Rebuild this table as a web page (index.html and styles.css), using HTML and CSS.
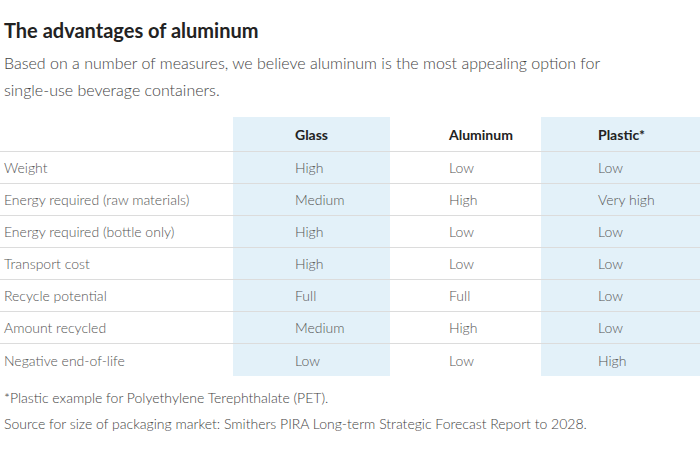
FILE: index.html
```html
<!DOCTYPE html>
<html>
<head>
<meta charset="utf-8">
<link rel="stylesheet" href="styles.css">
</head>
<body>
<div class="page">
  <h1 class="title">The advantages of aluminum</h1>
  <p class="subtitle">Based on a number of measures, we believe aluminum is the most appealing option for single-use beverage containers.</p>
  <div class="table">
    <div class="row head">
      <div class="cell label"></div>
      <div class="cell c1 shade">Glass</div>
      <div class="cell c2">Aluminum</div>
      <div class="cell c3 shade">Plastic*</div>
    </div>
    <div class="row">
      <div class="cell label">Weight</div>
      <div class="cell c1 shade">High</div>
      <div class="cell c2">Low</div>
      <div class="cell c3 shade">Low</div>
    </div>
    <div class="row">
      <div class="cell label">Energy required (raw materials)</div>
      <div class="cell c1 shade">Medium</div>
      <div class="cell c2">High</div>
      <div class="cell c3 shade">Very high</div>
    </div>
    <div class="row">
      <div class="cell label">Energy required (bottle only)</div>
      <div class="cell c1 shade">High</div>
      <div class="cell c2">Low</div>
      <div class="cell c3 shade">Low</div>
    </div>
    <div class="row">
      <div class="cell label">Transport cost</div>
      <div class="cell c1 shade">High</div>
      <div class="cell c2">Low</div>
      <div class="cell c3 shade">Low</div>
    </div>
    <div class="row">
      <div class="cell label">Recycle potential</div>
      <div class="cell c1 shade">Full</div>
      <div class="cell c2">Full</div>
      <div class="cell c3 shade">Low</div>
    </div>
    <div class="row">
      <div class="cell label">Amount recycled</div>
      <div class="cell c1 shade">Medium</div>
      <div class="cell c2">High</div>
      <div class="cell c3 shade">Low</div>
    </div>
    <div class="row last">
      <div class="cell label">Negative end-of-life</div>
      <div class="cell c1 shade">Low</div>
      <div class="cell c2">Low</div>
      <div class="cell c3 shade">High</div>
    </div>
  </div>
  <p class="note">*Plastic example for Polyethylene Terephthalate (PET).</p>
  <p class="note">Source for size of packaging market: Smithers PIRA Long-term Strategic Forecast Report to 2028.</p>
</div>
</body>
</html>
```

FILE: styles.css
```css
html, body {
  margin: 0;
  padding: 0;
  background: #ffffff;
}
.page {
  width: 700px;
  font-family: Lato, "Liberation Sans", sans-serif;
  color: #444;
}
.title {
  margin: 0;
  padding: 17px 0 0 4px;
  font-size: 20px;
  line-height: 26px;
  font-weight: 700;
  color: #222;
}
.subtitle {
  margin: 0;
  padding: 6px 90px 0 4px;
  font-size: 16px;
  line-height: 27px;
  font-weight: 300;
  color: #444;
}
.table {
  margin-top: 14px;
  display: flex;
  flex-direction: column;
}
.row {
  display: grid;
  grid-template-columns: 233px 157px 151px 1fr;
  height: 32px;
  border-bottom: 1px solid #dcdcdc;
  box-sizing: border-box;
}
.row.head {
  height: 35px;
}
.row.last {
  border-bottom: none;
}
.cell {
  display: flex;
  align-items: center;
  font-size: 14px;
  font-weight: 300;
  color: #555;
  white-space: nowrap;
}
.head .cell {
  font-weight: 700;
  color: #222;
  padding-top: 1px;
}
.label {
  padding-left: 4px;
}
.c1 { padding-left: 62px; }
.c2 { padding-left: 59px; }
.c3 { padding-left: 57px; }
.shade {
  background: #e3f1f9;
}
.note {
  margin: 0;
  padding-left: 4px;
  font-size: 14px;
  line-height: 26px;
  font-weight: 300;
  color: #444;
}
.table + .note {
  margin-top: 9px;
}
```
